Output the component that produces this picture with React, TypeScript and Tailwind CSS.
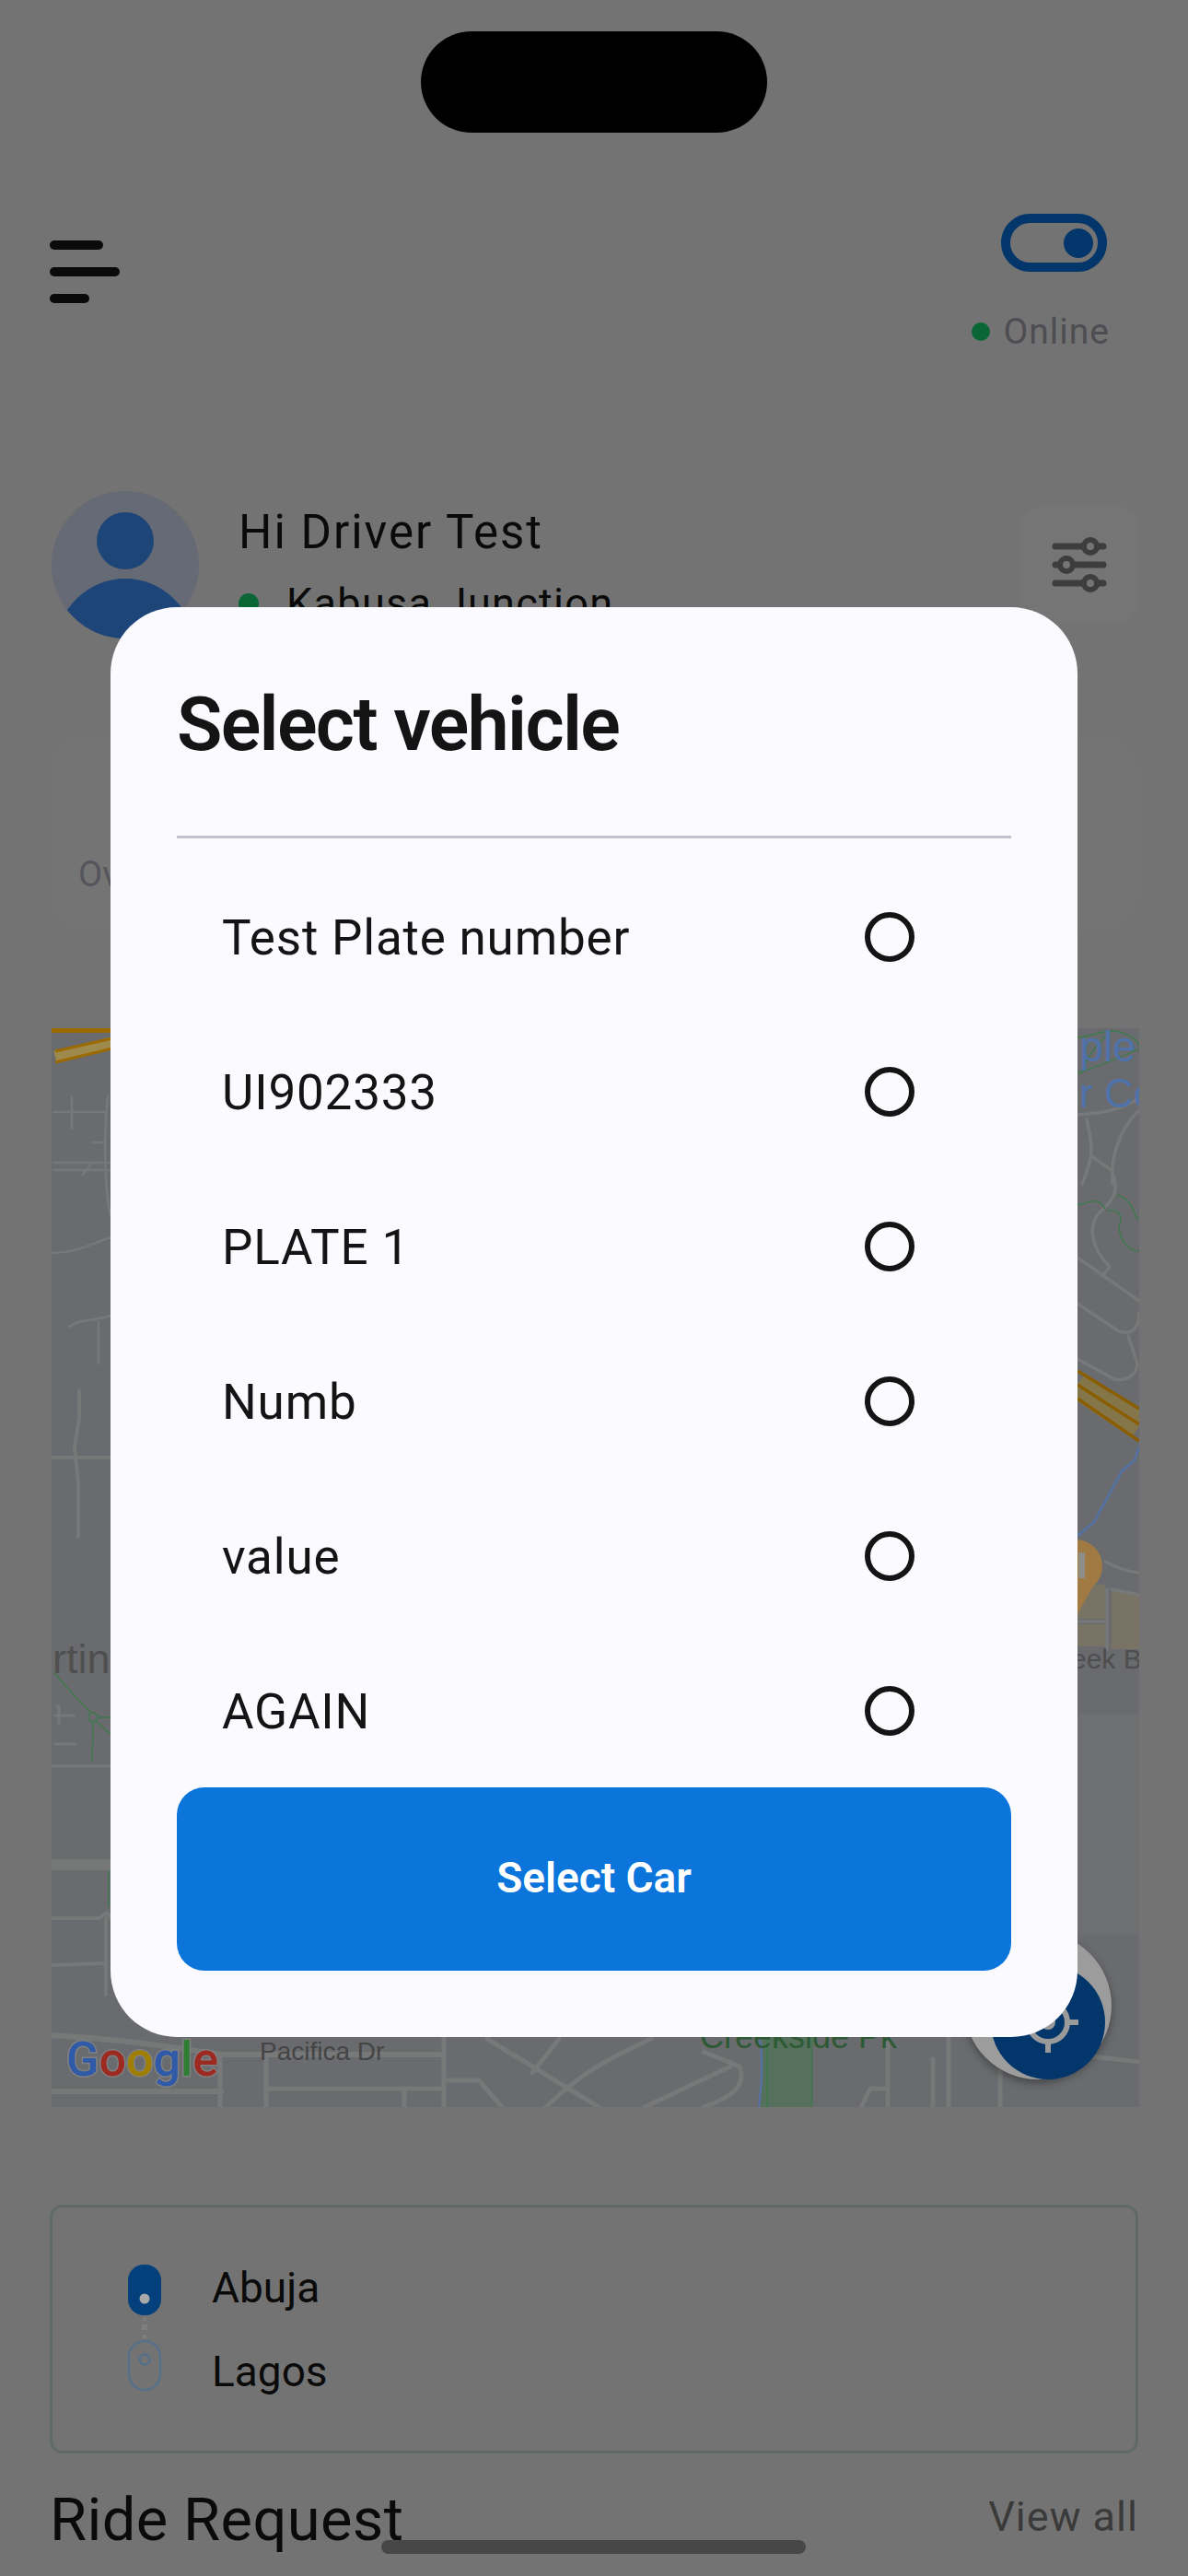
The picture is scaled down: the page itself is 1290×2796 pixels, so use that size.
import React from "react";

const plates = ["Test Plate number", "UI902333", "PLATE 1", "Numb", "value", "AGAIN"];

function MapDrawing() {
  const road = { fill: "none", stroke: "#777878", strokeLinecap: "round" as const, strokeLinejoin: "round" as const };
  return (
    <svg className="block h-full w-full" viewBox="56 1116 1181 1171" xmlns="http://www.w3.org/2000/svg">
      <rect x="56" y="1116" width="1181" height="1171" fill="#6a6b6e" />
      <rect x="1170" y="1860" width="67" height="240" fill="#6e6f70" />
      {/* blocks */}
      <path d="M1170 1720H1200V1757H1170ZM1207 1727L1237 1731V1790H1207ZM1170 1763H1200V1787H1170Z" fill="#787365" />
      {/* park */}
      <rect x="826" y="2205" width="56" height="82" fill="#55705c" />
      {/* left roads */}
      <g {...road} strokeWidth="3">
        <path d="M58 1207H115M58 1262H120M58 1270H120M78 1190V1225M57 1360C80 1360 95 1352 120 1343M117 1190C113 1230 113 1290 120 1320M75 1440C90 1430 100 1435 120 1428M107 1435V1480M100 1240H115M90 1275L100 1262" strokeWidth="2.5" />
        <path d="M56 1582H120M86 1510V1540L81 1570L85 1610V1668" strokeWidth="4" />
        <path d="M56 1917H120M60 1862H80M60 1893H82M62 1852H64V1870" strokeWidth="3" />
        <path d="M56 2024H120" strokeWidth="12" />
        <path d="M56 2082H108L116 2076L120 2082M115 2082V2165M56 2133L112 2131" strokeWidth="4" />
        <path d="M56 2209C80 2212 100 2208 240 2230H482M56 2270H240" strokeWidth="6" />
      </g>
      {/* bottom roads */}
      <g {...road} strokeWidth="5">
        <path d="M239 2232V2287M289 2232V2287M289 2267H480M439 2267V2287M482 2205V2287M482 2258H520L545 2287M529 2213L650 2287M607 2213L578 2250M707 2213C660 2235 630 2250 593 2287M764 2227L803 2243C810 2260 800 2275 764 2287M793 2243L700 2287M964 2205V2287M964 2267H945L935 2287M1086 2215V2287M1100 2222L1237 2238M1030 2205V2287M1013 2235V2287" />
      </g>
      {/* right roads */}
      <g {...road} strokeWidth="3.5">
        <path d="M1170 1210C1200 1208 1215 1205 1237 1192M1180 1215C1185 1240 1190 1250 1175 1285M1208 1285C1205 1260 1215 1225 1237 1205M1185 1255L1207 1270C1215 1290 1212 1300 1195 1315C1180 1330 1185 1355 1205 1375L1197 1385M1170 1365L1237 1412M1170 1415L1215 1445C1230 1450 1237 1440 1237 1425M1170 1475L1210 1497C1225 1500 1235 1490 1235 1480L1225 1450M1200 1695C1215 1703 1225 1706 1237 1707M1202 1725V1790M1170 1760H1202M1207 1725L1237 1731" />
      </g>
      {/* highway */}
      <rect x="56" y="1116" width="66" height="5" fill="#9b6a00" />
      <path d="M60 1147L122 1132" stroke="#9f8a4d" strokeWidth="13" fill="none" />
      <path d="M60 1141L122 1127M60 1153L122 1138" stroke="#9b6a00" strokeWidth="3" fill="none" />
      <path d="M1170 1503L1237 1548" stroke="#85764a" strokeWidth="30" fill="none" />
      <path d="M1170 1488L1237 1529M1170 1503L1237 1546M1170 1518L1237 1564" stroke="#8a5e00" strokeWidth="3.5" fill="none" />
      {/* water */}
      <path d="M1170 1667L1188 1652L1218 1597L1232 1585L1237 1570" stroke="#56719e" strokeWidth="3" fill="none" />
      <path d="M824 2205C830 2240 826 2270 824 2287" stroke="#56719e" strokeWidth="2.5" fill="none" />
      {/* trails */}
      <g fill="none" stroke="#3d7a4c" strokeWidth="1.4">
        <path d="M58 1815L85 1845L100 1860M104 1868L120 1882M101 1869L100 1913M106 1864H120M118 2030V2070" />
        <circle cx="101" cy="1864" r="5" />
        <path d="M1170 1126C1185 1126 1200 1116 1215 1120C1225 1122 1235 1128 1237 1135M1170 1165C1195 1155 1215 1150 1237 1138M1175 1165C1180 1145 1195 1130 1205 1120M1170 1308C1185 1305 1192 1298 1200 1312M1202 1314C1215 1312 1220 1320 1215 1330C1215 1345 1225 1358 1237 1358M1213 1297C1225 1300 1230 1310 1234 1322H1237M833 2205V2287M882 2205V2287" />
      </g>
      {/* marker */}
      <circle cx="1168" cy="1700" r="29" fill="#a07a42" />
      <path d="M1143 1712L1170 1752L1192 1712Z" fill="#a07a42" />
      <rect x="1171" y="1685" width="7" height="28" fill="#8e8e86" />
      {/* labels */}
      <g fontFamily="'Liberation Sans', sans-serif">
        <text x="1134" y="1152" fontSize="46" fill="#4f72aa">mple P</text>
        <text x="1172" y="1202" fontSize="44" fill="#4f72aa">r Cen</text>
        <text x="1153" y="1811" fontSize="30" fill="#4e4e4e">reek B</text>
        <text x="32" y="1816" fontSize="45" fill="#4f4f4f">ertino</text>
        <text x="282" y="2236" fontSize="28" fill="#454545">Pacifica Dr</text>
        <text x="760" y="2223" fontSize="36" fill="#2d5a34">Creekside Pk</text>
      </g>
      <text x="72" y="2253" fontSize="52" fontWeight="500" fontFamily="Roboto, sans-serif" stroke="#808080" strokeWidth="3" style={{ paintOrder: "stroke" }}>
        <tspan fill="#2f5aa8">G</tspan>
        <tspan fill="#9c2a20">o</tspan>
        <tspan fill="#a07e00">o</tspan>
        <tspan fill="#2f5aa8">g</tspan>
        <tspan fill="#2e7d32">l</tspan>
        <tspan fill="#9c2a20">e</tspan>
      </text>
    </svg>
  );
}

function Toggle() {
  return (
    <div className="flex h-[63px] w-[115px] items-center justify-end rounded-full border-[10px] border-[#03366b] pr-[5px]">
      <div className="h-8 w-8 rounded-full bg-[#03366b]" />
    </div>
  );
}

function Sliders() {
  return (
    <svg width="60" height="62" viewBox="0 0 60 62" fill="none" stroke="#3d3d3d" strokeWidth="7" strokeLinecap="round">
      <path d="M4 11H34M50 11H56M4 31H8M24 31H56M4 51H34M50 51H56" />
      <circle cx="42" cy="11" r="7" strokeWidth="6" />
      <circle cx="16" cy="31" r="7" strokeWidth="6" />
      <circle cx="42" cy="51" r="7" strokeWidth="6" />
    </svg>
  );
}

function Avatar() {
  return (
    <div className="relative h-40 w-40 shrink-0 overflow-hidden rounded-full bg-[#666a75]">
      <div className="absolute left-[49px] top-[23px] h-[62px] w-[62px] rounded-full bg-[#1e4578]" />
      <div className="absolute left-[5px] top-[95px] h-[150px] w-[150px] rounded-full bg-[#1e4578]" />
    </div>
  );
}

function RouteIcons() {
  return (
    <svg width="40" height="140" viewBox="0 0 40 140" className="shrink-0">
      <rect x="2" y="0" width="36" height="55" rx="17" fill="#03407c" />
      <circle cx="20" cy="37" r="5.5" fill="#a9a9a9" />
      <rect x="18" y="58" width="4" height="3" fill="#7f7f7f" />
      <rect x="17" y="65" width="6" height="6" fill="#7f7f7f" />
      <rect x="18" y="76" width="4" height="4" fill="#7f7f7f" />
      <rect x="3" y="83" width="34" height="53" rx="17" fill="none" stroke="#56708a" strokeWidth="2.5" />
      <circle cx="20" cy="103" r="5.5" fill="none" stroke="#56708a" strokeWidth="2.5" />
    </svg>
  );
}

function Fab() {
  return (
    <div className="absolute left-[991px] top-[981px] flex h-40 w-40 rounded-full bg-[#9c9c9c] shadow-[0_4px_10px_rgba(0,0,0,0.35)]">
      <div className="absolute left-[29px] top-[36px] flex h-[124px] w-[124px] items-center justify-center rounded-full bg-[#03366b]">
        <svg width="70" height="70" viewBox="0 0 70 70" fill="none" stroke="#9a9a9a" strokeWidth="6">
          <circle cx="35" cy="35" r="21" />
          <circle cx="35" cy="35" r="8" fill="#9a9a9a" stroke="none" />
          <path d="M35 2V12M35 58V68M2 35H12M58 35H68" />
        </svg>
      </div>
    </div>
  );
}

function VehicleRow({ label }: { label: string }) {
  return (
    <div className="flex h-[168px] shrink-0 items-center justify-between pl-[49px] pr-[105px]">
      <span className="relative top-[1px] text-[53px] leading-none tracking-[0.8px] text-[#141414]">{label}</span>
      <span className="h-[54px] w-[54px] rounded-full border-[6px] border-[#141414]" />
    </div>
  );
}

export default function App() {
  return (
    <div className="relative h-[2796px] w-[1290px] overflow-hidden bg-[#737373] font-['Roboto',sans-serif]">
      <main className="flex flex-col px-[54px] pt-[232px]">
        <header className="flex h-[301px] items-start justify-between">
          <div className="flex flex-col gap-[19px] pt-[29px]">
            <div className="h-[10px] w-[58px] rounded-full bg-[#0a0a0a]" />
            <div className="h-[10px] w-[76px] rounded-full bg-[#0a0a0a]" />
            <div className="h-[10px] w-[43px] rounded-full bg-[#0a0a0a]" />
          </div>
          <div className="flex flex-col items-end">
            <div className="mr-[34px]"><Toggle /></div>
            <div className="mr-[31px] mt-[42px] flex items-center gap-[14px]">
              <span className="h-5 w-5 rounded-full bg-[#0b6635]" />
              <span className="text-[39px] leading-[46px] tracking-[1px] text-[#4d4d52]">Online</span>
            </div>
          </div>
        </header>

        <section className="flex h-[160px] items-center pl-[2px]">
          <Avatar />
          <div className="ml-[43px] flex flex-1 flex-col">
            <span className="relative top-[3px] text-[51px] leading-[60px] tracking-[2px] text-[#0a0a0a]">Hi Driver Test</span>
            <div className="mt-[24px] flex items-center gap-[30px]">
              <span className="h-[22px] w-[22px] rounded-full bg-[#0b6635]" />
              <span className="text-[45px] leading-[52px] tracking-[1.3px] text-[#0a0a0a]">Kabusa Junction</span>
            </div>
          </div>
          <div className="-mr-[2px] flex h-[130px] w-[132px] items-center justify-center rounded-[30px] bg-[#757575]">
            <Sliders />
          </div>
        </section>

        <section className="mt-[107px] flex h-[210px] items-end rounded-[40px] bg-[#747474] pb-[42px] pl-[31px]">
          <span className="text-[38px] leading-none text-[#55555c]">Overview</span>
        </section>

        <section className="relative ml-[2px] mt-[106px] h-[1171px] w-[1181px]">
          <MapDrawing />
          <Fab />
        </section>

        <section className="mt-[106px] flex h-[270px] items-center gap-[53px] rounded-[14px] border-[3px] border-[#5f6a68] pl-[80px]">
          <RouteIcons />
          <div className="flex flex-col gap-[38px]">
            <span className="relative top-[1px] text-[46px] leading-[54px] text-[#0a0a0a]">Abuja</span>
            <span className="text-[46px] leading-[54px] text-[#0a0a0a]">Lagos</span>
          </div>
        </section>

        <section className="mt-[35px] flex items-start justify-between">
          <span className="text-[65px] leading-[74px] tracking-[0.4px] text-[#0a0a0a]">Ride Request</span>
          <span className="pt-[8px] text-[45px] leading-[52px] tracking-[1px] text-[#3a3a3a]">View all</span>
        </section>
      </main>

      {/* system overlays */}
      <div className="absolute left-[457px] top-[34px] h-[110px] w-[376px] rounded-full bg-black" />
      <div className="absolute left-[414px] top-[2757px] h-[15px] w-[461px] rounded-full bg-[#474747]" />

      {/* modal */}
      <div className="absolute left-[120px] top-[659px] flex h-[1552px] w-[1050px] flex-col rounded-[72px] bg-[#fafaff] px-[72px]">
        <h1 className="pt-[81px] text-[81px] font-semibold leading-[94px] tracking-[-1.7px] text-[#141414]">Select vehicle</h1>
        <div className="mt-[73px] h-[3px] w-full bg-[#c2c2cf]" />
        <div className="flex h-[1030px] flex-col overflow-hidden pt-[23px]">
          {plates.map((p) => (
            <VehicleRow key={p} label={p} />
          ))}
        </div>
        <button className="flex h-[199px] w-full items-center justify-center rounded-[30px] bg-[#0b75db] pb-[2px] text-[46px] font-semibold text-white">
          Select Car
        </button>
      </div>
    </div>
  );
}
